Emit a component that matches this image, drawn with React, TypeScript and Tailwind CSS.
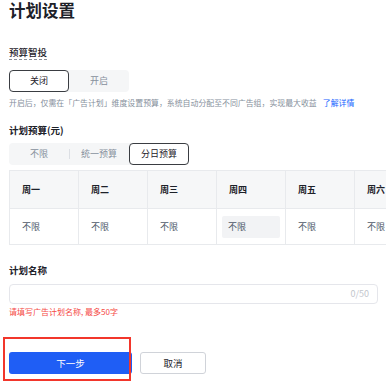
import { useState } from "react";

const FONT = { fontFamily: '"Noto Sans CJK SC", "Noto Sans", sans-serif' };

const DAYS = ["周一", "周二", "周三", "周四", "周五", "周六", "周日"];

function Segmented({
  items,
  value,
  onChange,
}: {
  items: string[];
  value: number;
  onChange: (i: number) => void;
}) {
  return (
    <div className="flex h-[22px] w-fit rounded-[4px] bg-[#f5f6f7]">
      {items.map((label, i) => {
        const active = i === value;
        const showDivider = i > 0 && !active && i - 1 !== value;
        return (
          <button
            key={label}
            onClick={() => onChange(i)}
            className={
              active
                ? "relative flex h-[22px] w-[60px] items-center justify-center rounded-[4px] border border-[#3a3d42] bg-white text-[9px] text-[#1d2129]"
                : "relative flex h-[22px] w-[60px] items-center justify-center text-[9px] text-[#86909c]"
            }
          >
            {showDivider && (
              <span className="absolute left-0 top-[6px] h-[10px] w-px bg-[#dcdfe4]" />
            )}
            {label}
          </button>
        );
      })}
    </div>
  );
}

export default function App() {
  const [smart, setSmart] = useState(0);
  const [budget, setBudget] = useState(2);
  const [name, setName] = useState("");

  return (
    <div className="flex min-h-screen flex-col bg-white pl-[9px] pr-[8px]" style={FONT}>
      <h1 className="text-[16.5px] font-semibold leading-[20px] text-[#1d2129]">计划设置</h1>

      <div className="mt-[26px] w-fit border-b border-dashed border-[#8a8f99] text-[9.5px] font-medium leading-[13px] text-[#1d2129]">
        预算智投
      </div>

      <div className="mt-[10px]">
        <Segmented items={["关闭", "开启"]} value={smart} onChange={setSmart} />
      </div>

      <p className="mt-[5px] whitespace-nowrap text-[7.9px] leading-[12px] text-[#86909c]">
        开启后，仅需在「广告计划」维度设置预算，系统自动分配至不同广告组，实现最大收益
        <a className="ml-[6px] text-[#1664ff]">了解详情</a>
      </p>

      <div className="mt-[15px] text-[9.5px] font-semibold leading-[13px] text-[#1d2129]">计划预算(元)</div>

      <div className="mt-[6px]">
        <Segmented items={["不限", "统一预算", "分日预算"]} value={budget} onChange={setBudget} />
      </div>

      <div className="-mr-[8px] mt-[5px] overflow-hidden">
        <div className="flex w-max border-b border-l border-t border-[#e8eaed]">
          {DAYS.map((d, i) => (
            <div key={d} className="w-[69px] border-r border-[#e8eaed]">
              <div className="flex h-[37px] items-center bg-[#f6f7f8] pl-[12px] text-[9px] font-semibold text-[#1d2129]">
                {d}
              </div>
              <div className="flex h-[36px] items-center border-t border-[#e8eaed] bg-white">
                {i === 3 ? (
                  <div className="ml-[5px] flex h-[22px] w-[58px] items-center rounded-[2px] bg-[#f2f3f5] pl-[6px] text-[9px] text-[#4e5969]">
                    不限
                  </div>
                ) : (
                  <span className="pl-[12px] text-[9px] text-[#4e5969]">不限</span>
                )}
              </div>
            </div>
          ))}
        </div>
      </div>

      <div className="mt-[19px] text-[9.5px] font-semibold leading-[13px] text-[#1d2129]">计划名称</div>

      <div className="mt-[7px] flex h-[20px] items-center rounded-[4px] border border-[#e5e6eb] px-[8px]">
        <input
          value={name}
          onChange={(e) => setName(e.target.value.slice(0, 50))}
          className="h-full min-w-0 flex-1 bg-transparent text-[9px] outline-none"
        />
        <span className="text-[9px] text-[#c2c6cc]">{name.length}/50</span>
      </div>

      <p className="mt-[2px] text-[8px] leading-[11px] text-[#f54a45]">请填写广告计划名称, 最多50字</p>

      <div className="mt-[35px] flex gap-[8px]">
        <div className="relative">
          <button className="flex h-[22px] w-[123px] items-center justify-center rounded-[3px] bg-[#1f5ef5] text-[9.5px] text-white">
            下一步
          </button>
          <div className="pointer-events-none absolute left-[-6px] top-[-15px] h-[44px] w-[128px] border-2 border-[#f2362b]" />
        </div>
        <button className="flex h-[22px] w-[66px] items-center justify-center rounded-[3px] border border-[#d0d3d9] bg-white text-[9.5px] text-[#1d2129]">
          取消
        </button>
      </div>
    </div>
  );
}
